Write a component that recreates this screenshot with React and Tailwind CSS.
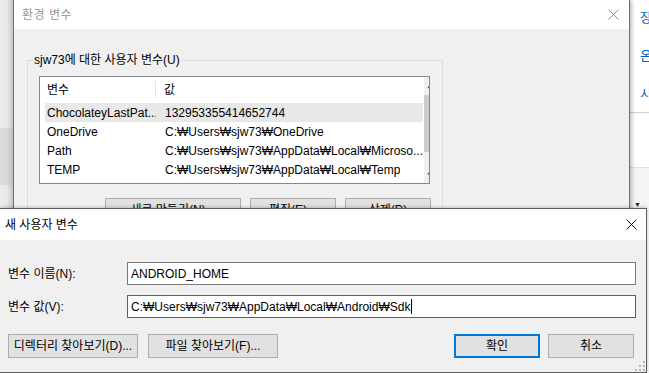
import React from "react";

const font = "font-['Liberation_Sans','Noto_Sans_CJK_KR',sans-serif]";

const CloseIcon = ({ color = "#000", size = 11 }) => (
  <svg width={size} height={size} viewBox="0 0 11 11">
    <path d="M0.5 0.5 L10.5 10.5 M10.5 0.5 L0.5 10.5" stroke={color} strokeWidth="1" fill="none" />
  </svg>
);

const Chevron = ({ up }) => (
  <svg width="9" height="6" viewBox="0 0 9 6">
    <path d={up ? "M1 5 L4.5 1.5 L8 5" : "M1 1 L4.5 4.5 L8 1"} stroke="#606060" strokeWidth="1.6" fill="none" />
  </svg>
);

const rows = [
  ["ChocolateyLastPat...", "132953355414652744", true],
  ["OneDrive", "C:₩Users₩sjw73₩OneDrive", false],
  ["Path", "C:₩Users₩sjw73₩AppData₩Local₩Microso...", false],
  ["TEMP", "C:₩Users₩sjw73₩AppData₩Local₩Temp", false],
  ["TMP", "C:₩Users₩sjw73₩AppData₩Local₩Temp", false],
];

const WinButton = ({ children, className = "" }) => (
  <div
    className={`flex items-center justify-center border border-[#adadad] bg-[#e1e1e1] text-[12px] text-black ${className}`}
  >
    {children}
  </div>
);

export default function App() {
  return (
    <div className={`relative w-[649px] h-[373px] overflow-hidden bg-[#ebebeb] ${font}`}>
      {/* window behind, left strip */}
      <div className="absolute left-0 top-0 w-[13px] h-[373px] flex flex-col">
        <div className="h-[128px] bg-gradient-to-r from-[#ececec] via-[#e8e8e8] to-[#c9c9c9]" />
        <div className="h-[57px] bg-gradient-to-r from-[#dcdcdc] via-[#d8d8d8] to-[#c4c4c4]" />
        <div className="flex-1 bg-gradient-to-r from-[#ececec] via-[#e8e8e8] to-[#c9c9c9]" />
      </div>

      {/* window behind, right strip (settings) */}
      <div className="absolute left-[630px] top-0 w-[19px] h-[373px] flex flex-col bg-white">
        <div className="h-[113px] flex flex-col pl-[10px] pt-[9px] gap-[20px] text-[#0067c0] text-[13px] leading-[18px] border-b border-[#d0d0d0]">
          <span>장</span>
          <span>온</span>
          <span>시</span>
        </div>
        <div className="h-[55px] border-b border-[#e0e0e0] bg-white" />
        <div className="flex-1 bg-[#f5f5f5] flex flex-col items-start pl-[4px] pt-[33px]">
          <span className="text-[7px] leading-[7px] text-[#222]">▼</span>
        </div>
      </div>

      {/* 환경 변수 dialog */}
      <div className="absolute left-[13px] top-0 w-[617px] h-[373px] flex flex-col border-l border-r border-[#6f6f6f] shadow-[2px_0_4px_rgba(0,0,0,0.25)]">
        <div className="h-[29px] bg-white flex items-center justify-between pl-[8px] pr-[10px]">
          <span className="text-[12px] text-[#999999] tracking-[0.5px]">환경 변수</span>
          <CloseIcon color="#8a8a8a" />
        </div>
        <div className="flex-1 bg-[#f0f0f0] pt-[23px] pl-[13px]">
          <fieldset className="w-[416px] border border-[#dcdcdc] pl-[11px] pr-[11px] pb-[10px]">
            <legend className="ml-[-6px] px-[1px] text-[12px] leading-[16px] text-black">
              sjw73에 대한 사용자 변수(U)
            </legend>
            <div className="mt-[8px] w-[391px] h-[108px] border border-[#828790] bg-white flex overflow-hidden">
              <div className="flex-1 flex flex-col">
                <div className="h-[26px] pt-[4px] flex items-center text-[12px] text-black">
                  <div className="w-[116px] pl-[7px] h-full flex items-center border-r border-[#e5e5e5]">변수</div>
                  <div className="pl-[8px]">값</div>
                </div>
                <div className="pt-[4px] flex flex-col">
                  {rows.map(([name, value, sel]) => (
                    <div
                      key={name}
                      className={`h-[19px] ml-[5px] mr-[1px] flex items-center text-[12px] text-black whitespace-nowrap ${
                        sel ? "bg-[#e8e8e8]" : ""
                      }`}
                    >
                      <div className="w-[111px] pl-[2px] overflow-hidden">{name}</div>
                      <div className="pl-[9px] overflow-hidden">{value}</div>
                    </div>
                  ))}
                </div>
              </div>
              <div className="w-[17px] bg-[#f0f0f0] flex flex-col items-center">
                <div className="h-[18px] flex items-center justify-center">
                  <Chevron up />
                </div>
                <div className="w-[15px] h-[57px] bg-[#cdcdcd]" />
                <div className="flex-1" />
                <div className="h-[17px] flex items-center justify-center">
                  <Chevron />
                </div>
              </div>
            </div>
            <div className="mt-[14px] flex justify-end gap-[9px]">
              <WinButton className="w-[136px] h-[23px]">새로 만들기(N)...</WinButton>
              <WinButton className="w-[86px] h-[23px]">편집(E)...</WinButton>
              <WinButton className="w-[86px] h-[23px]">삭제(D)</WinButton>
            </div>
          </fieldset>
        </div>
      </div>

      {/* 새 사용자 변수 dialog */}
      <div className="absolute left-0 top-[208px] w-[647px] h-[165px] flex flex-col border-t border-r border-b border-[#5c5c5c] shadow-[0_-1px_3px_rgba(0,0,0,0.2)]">
        <div className="h-[31px] bg-white flex items-center justify-between pl-[5px] pr-[9px]">
          <span className="text-[12px] text-black">새 사용자 변수</span>
          <CloseIcon color="#111" />
        </div>
        <div className="relative flex-1 bg-[#f0f0f0] flex flex-col pl-[8px] pt-[22px]">
          <div className="flex items-center">
            <span className="w-[119px] text-[12px] text-black">변수 이름(N):</span>
            <div className="w-[509px] h-[23px] border border-[#7a7a7a] bg-white flex items-center pl-[3px] text-[12px] text-black">
              ANDROID_HOME
            </div>
          </div>
          <div className="mt-[10px] flex items-center">
            <span className="w-[119px] text-[12px] text-black">변수 값(V):</span>
            <div className="w-[509px] h-[23px] border border-[#0078d7] bg-white flex items-center pl-[3px] text-[12px] text-black">
              <span>C:₩Users₩sjw73₩AppData₩Local₩Android₩Sdk</span>
              <span className="w-[1px] h-[15px] bg-black ml-[1px]" />
            </div>
          </div>
          <div className="mt-[16px] flex items-center w-[626px]">
            <WinButton className="w-[130px] h-[24px]">디렉터리 찾아보기(D)...</WinButton>
            <WinButton className="ml-[10px] w-[130px] h-[24px]">파일 찾아보기(F)...</WinButton>
            <div className="flex-1" />
            <div className="w-[86px] h-[24px] flex items-center justify-center border-2 border-[#0078d7] bg-[#e1e1e1] text-[12px] text-black">
              확인
            </div>
            <WinButton className="ml-[8px] w-[86px] h-[24px]">취소</WinButton>
          </div>
          {/* resize grip */}
          <svg className="absolute right-[1px] bottom-[1px]" width="10" height="10" viewBox="0 0 10 10">
            <rect x="8" y="0" width="2" height="2" fill="#b8b8b8" />
            <rect x="4" y="4" width="2" height="2" fill="#b8b8b8" />
            <rect x="8" y="4" width="2" height="2" fill="#b8b8b8" />
            <rect x="0" y="8" width="2" height="2" fill="#b8b8b8" />
            <rect x="4" y="8" width="2" height="2" fill="#b8b8b8" />
            <rect x="8" y="8" width="2" height="2" fill="#b8b8b8" />
          </svg>
        </div>
      </div>
    </div>
  );
}
